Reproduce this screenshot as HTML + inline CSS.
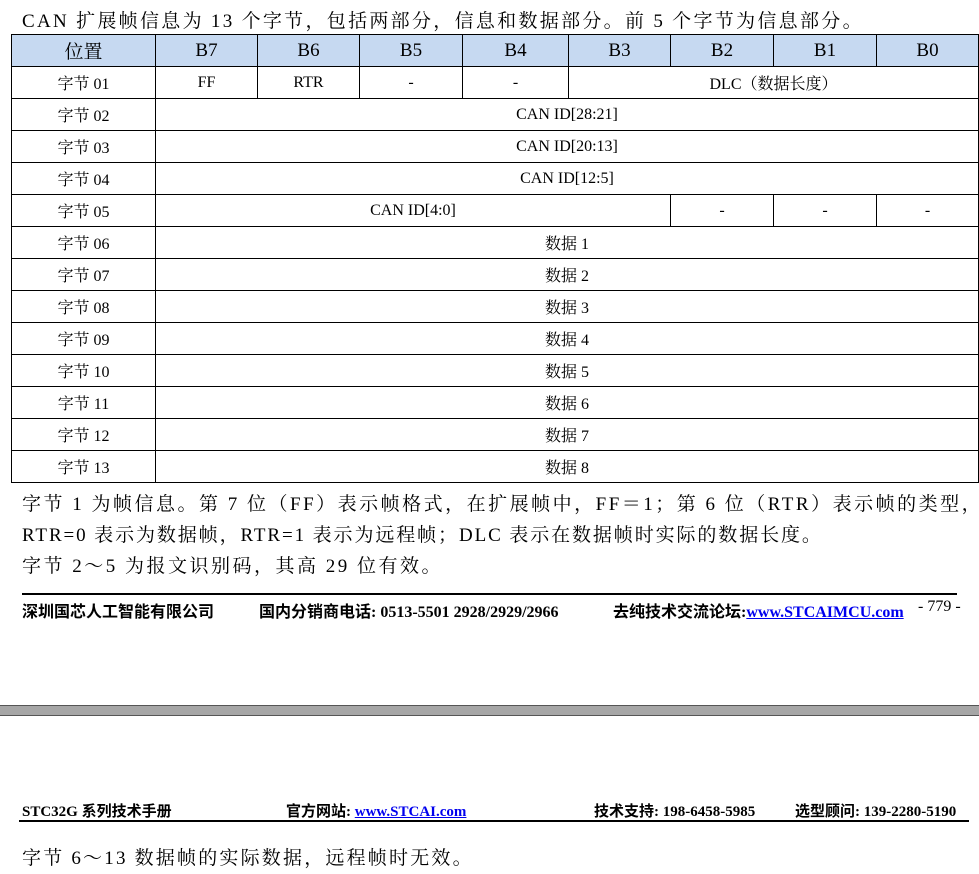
<!DOCTYPE html>
<html><head><meta charset="utf-8"><style>
body{margin:0;width:979px;height:874px;background:#fff;position:relative;overflow:hidden;font-family:"Liberation Serif","Noto Serif CJK SC",serif;color:#000}
.a{position:absolute;white-space:nowrap}
.p{font-size:19px}
table{position:absolute;left:11px;top:34px;border-collapse:collapse;table-layout:fixed;font-size:16px}
td{border:1px solid #000;text-align:center;height:31px;padding:0}
tr.h td{background:#c6d9f1;font-size:19px;height:31px}
.f{font-weight:bold;font-size:16px;font-family:"Liberation Serif","Noto Sans CJK SC",serif}
.g{font-weight:bold;font-size:15px;font-family:"Liberation Serif","Noto Sans CJK SC",serif}
a{color:#00e;text-decoration:underline}
</style></head><body>
<div class="a p" style="left:22px;top:6px;letter-spacing:2.3px">CAN 扩展帧信息为 13 个字节，包括两部分，信息和数据部分。前 5 个字节为信息部分。</div>
<table>
<colgroup><col style="width:144px"><col style="width:102px"><col style="width:102px"><col style="width:103px"><col style="width:106px"><col style="width:102px"><col style="width:103px"><col style="width:103px"><col style="width:102px"></colgroup>
<tr class="h"><td>位置</td><td>B7</td><td>B6</td><td>B5</td><td>B4</td><td>B3</td><td>B2</td><td>B1</td><td>B0</td></tr>
<tr><td>字节 01</td><td>FF</td><td>RTR</td><td>-</td><td>-</td><td colspan="4">DLC（数据长度）</td></tr>
<tr><td>字节 02</td><td colspan="8">CAN ID[28:21]</td></tr>
<tr><td>字节 03</td><td colspan="8">CAN ID[20:13]</td></tr>
<tr><td>字节 04</td><td colspan="8">CAN ID[12:5]</td></tr>
<tr><td>字节 05</td><td colspan="5">CAN ID[4:0]</td><td>-</td><td>-</td><td>-</td></tr>
<tr><td>字节 06</td><td colspan="8">数据 1</td></tr>
<tr><td>字节 07</td><td colspan="8">数据 2</td></tr>
<tr><td>字节 08</td><td colspan="8">数据 3</td></tr>
<tr><td>字节 09</td><td colspan="8">数据 4</td></tr>
<tr><td>字节 10</td><td colspan="8">数据 5</td></tr>
<tr><td>字节 11</td><td colspan="8">数据 6</td></tr>
<tr><td>字节 12</td><td colspan="8">数据 7</td></tr>
<tr><td>字节 13</td><td colspan="8">数据 8</td></tr>
</table>
<div class="a p" style="left:22px;top:489px;letter-spacing:2.5px">字节 1 为帧信息。第 7 位（FF）表示帧格式，在扩展帧中，FF＝1；第 6 位（RTR）表示帧的类型，</div>
<div class="a p" style="left:22px;top:520px;letter-spacing:1.9px">RTR=0 表示为数据帧，RTR=1 表示为远程帧；DLC 表示在数据帧时实际的数据长度。</div>
<div class="a p" style="left:22px;top:551px;letter-spacing:2.5px">字节 2～5 为报文识别码，其高 29 位有效。</div>
<div class="a" style="left:22px;top:593px;width:935px;height:2px;background:#000"></div>
<div class="a f" style="left:22px;top:598px">深圳国芯人工智能有限公司</div>
<div class="a f" style="left:259px;top:598px">国内分销商电话: 0513-5501 2928/2929/2966</div>
<div class="a f" style="left:613px;top:598px">去纯技术交流论坛:<a>www.STCAIMCU.com</a></div>
<div class="a" style="left:918px;top:598px;font-size:16px">- 779 -</div>
<div class="a" style="left:0;top:705px;width:979px;height:9px;background:#a6a6a6;border-top:1px solid #555;border-bottom:1px solid #555"></div>
<div class="a g" style="left:22px;top:800px">STC32G 系列技术手册</div>
<div class="a g" style="left:286px;top:800px">官方网站: <a>www.STCAI.com</a></div>
<div class="a g" style="left:594px;top:800px">技术支持: 198-6458-5985</div>
<div class="a g" style="left:795px;top:800px">选型顾问: 139-2280-5190</div>
<div class="a" style="left:19px;top:820px;width:950px;height:2px;background:#000"></div>
<div class="a p" style="left:22px;top:843px;letter-spacing:2.2px">字节 6～13 数据帧的实际数据，远程帧时无效。</div>
</body></html>
